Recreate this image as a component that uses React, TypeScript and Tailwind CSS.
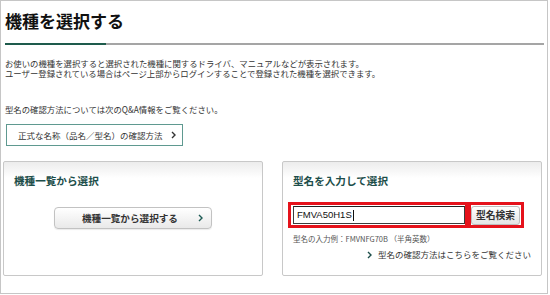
import React from "react";

function Chevron({ className = "" }: { className?: string }) {
  return (
    <svg width="5" height="8" viewBox="0 0 5 8" className={className}>
      <path d="M1 1 L4 4 L1 7" fill="none" stroke="currentColor" strokeWidth="1.4" />
    </svg>
  );
}

export default function App() {
  return (
    <div className="w-[550px] h-[295px] bg-white font-['Noto_Sans_CJK_JP',sans-serif]">
      <div className="w-[548px] h-[294px] border border-[#c6c6c6] flex flex-col">
        <h1 className="ml-[4px] mt-[11px] text-[17px] leading-[17px] font-bold text-[#111]">機種を選択する</h1>
        <div className="ml-[4px] mt-[14px] w-[539px] flex">
          <div className="w-[101px] h-[2px] bg-[#1e5b4c]" />
          <div className="flex-1 h-[2px] bg-[#a5a5a5]" />
        </div>
        <div className="ml-[4px] mt-[13px] text-[8.4px] leading-[10px] text-[#333]">
          <p>お使いの機種を選択すると選択された機種に関するドライバ、マニュアルなどが表示されます。</p>
          <p>ユーザー登録されている場合はページ上部からログインすることで登録された機種を選択できます。</p>
        </div>
        <p className="ml-[4px] mt-[26px] text-[8.4px] leading-[10px] text-[#333]">
          {"型名の確認方法については次のQ&A情報をご覧ください。"}
        </p>
        <div className="ml-[5px] mt-[10px] w-[177px] h-[22px] border border-[#5f9990] flex items-center pl-[11px] pr-[6px] text-[8.5px] text-[#333]">
          <span className="flex-1">正式な名称（品名／型名）の確認方法</span>
          <Chevron className="text-[#333]" />
        </div>
        <div className="ml-[2px] mt-[15px] flex gap-[19px]">
          <div className="w-[260px] h-[115px] border border-[#c8c8c8] rounded-[2px] bg-[linear-gradient(to_bottom,#ececec,#ffffff_16px)] flex flex-col pt-[13px]">
            <h2 className="pl-[10px] text-[10.6px] leading-[12px] font-bold text-[#1d4e4a]">機種一覧から選択</h2>
            <div className="self-center mt-[20px] w-[158px] h-[22px] rounded-[4px] border border-[#c2c2c2] bg-[linear-gradient(to_bottom,#ffffff,#e9e9e9)] shadow-[0_1px_1px_rgba(0,0,0,0.08)] flex items-center pl-[27px] pr-[8px]">
              <span className="flex-1 text-[9.6px] font-bold text-[#333]">機種一覧から選択する</span>
              <Chevron className="text-[#1d5b55]" />
            </div>
          </div>
          <div className="w-[260px] h-[115px] border border-[#c8c8c8] rounded-[2px] bg-[linear-gradient(to_bottom,#ececec,#ffffff_16px)] flex flex-col pt-[13px]">
            <h2 className="pl-[10px] text-[10.6px] leading-[12px] font-bold text-[#1d4e4a]">型名を入力して選択</h2>
            <div className="ml-[5px] mt-[15px] flex">
              <div className="w-[180px] h-[26px] border-[3px] border-[#e5121b] flex items-center pl-[2px]">
                <div className="w-[172px] h-[18px] border border-[#3c3c3c] border-t-[#222] flex items-center pl-[3px] font-['Liberation_Sans',sans-serif] text-[9.5px] text-[#111]">
                  <span>FMVA50H1S</span>
                  <span className="ml-[1px] w-[1px] h-[11px] bg-[#111]" />
                </div>
              </div>
              <div className="w-[56px] h-[26px] border-[3px] border-[#e5121b] flex items-center pl-[0px]">
                <div className="w-[49px] h-[19px] rounded-[3px] border border-[#bdbdbd] bg-[linear-gradient(to_bottom,#ffffff,#e4e4e4)] flex items-center justify-center text-[9.8px] font-bold text-[#333]">
                  型名検索
                </div>
              </div>
            </div>
            <p className="pl-[10px] mt-[6px] text-[7.5px] leading-[9px] text-[#555]">型名の入力例：FMVNFG70B （半角英数）</p>
            <div className="mt-[7px] pr-[10px] flex items-center justify-end gap-[6px] text-[8.5px] leading-[9px] text-[#333]">
              <Chevron className="text-[#1d4e4a]" />
              <span>型名の確認方法はこちらをご覧ください</span>
            </div>
          </div>
        </div>
      </div>
    </div>
  );
}
